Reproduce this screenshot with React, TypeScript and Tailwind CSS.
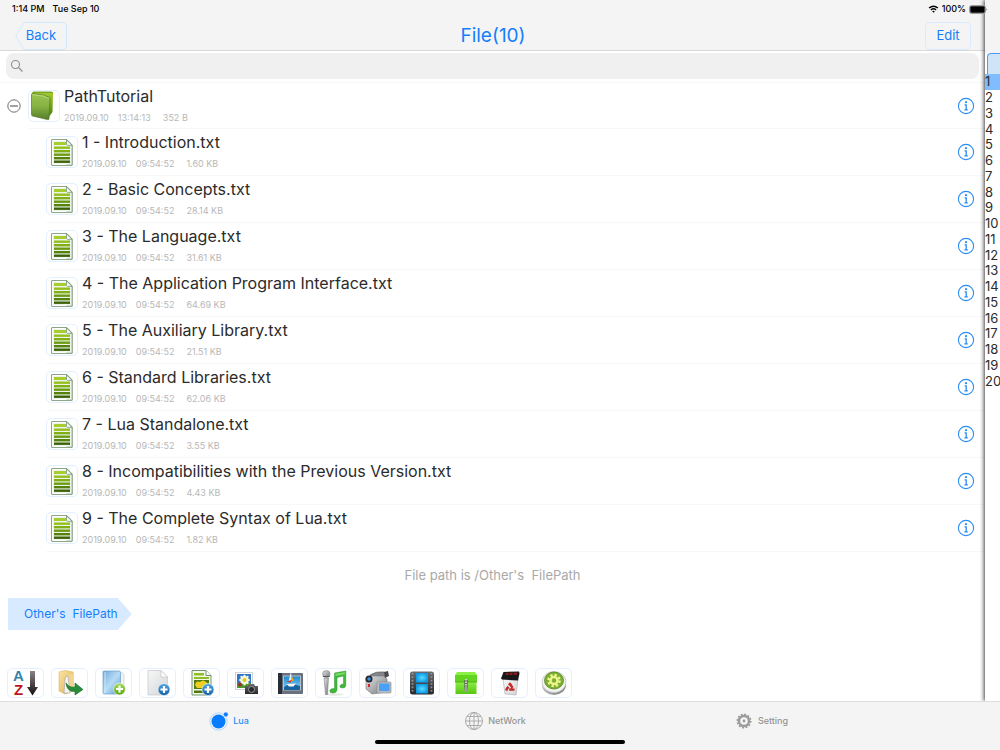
import clsx from 'clsx';
import React from 'react'

type TileProps = {
    label: string;
    children: React.ReactNode;
}

const files = [
    { name: '1 - Introduction.txt', size: '1.60 KB' },
    { name: '2 - Basic Concepts.txt', size: '28.14 KB' },
    { name: '3 - The Language.txt', size: '31.61 KB' },
    { name: '4 - The Application Program Interface.txt', size: '64.69 KB' },
    { name: '5 - The Auxiliary Library.txt', size: '21.51 KB' },
    { name: '6 - Standard Libraries.txt', size: '62.06 KB' },
    { name: '7 - Lua Standalone.txt', size: '3.55 KB' },
    { name: '8 - Incompatibilities with the Previous Version.txt', size: '4.43 KB' },
    { name: '9 - The Complete Syntax of Lua.txt', size: '1.82 KB' },
]

const lineNumbers = Array.from({ length: 20 }, (_, i) => i + 1)

// Shared gradients, referenced by id from every icon below
function Gradients() {
    return (
        <svg className="absolute h-0 w-0" aria-hidden="true">
            <defs>
                <linearGradient id="leaf" x1="0" y1="0" x2="0" y2="1">
                    <stop offset="0" stopColor="#a5cf2f" />
                    <stop offset="1" stopColor="#4a7a0c" />
                </linearGradient>
                <linearGradient id="folderFront" x1="0" y1="0" x2="0" y2="1">
                    <stop offset="0" stopColor="#9cc654" />
                    <stop offset="0.5" stopColor="#85b142" />
                    <stop offset="1" stopColor="#567c2a" />
                </linearGradient>
                <linearGradient id="arrowDown" x1="0" y1="0" x2="0" y2="1">
                    <stop offset="0" stopColor="#8d8585" />
                    <stop offset="1" stopColor="#120d0d" />
                </linearGradient>
                <linearGradient id="manila" x1="0" y1="0" x2="1" y2="1">
                    <stop offset="0" stopColor="#fbe5a4" />
                    <stop offset="1" stopColor="#dcae55" />
                </linearGradient>
                <linearGradient id="blueFolder" x1="0" y1="0" x2="1" y2="1">
                    <stop offset="0" stopColor="#6fa9dc" />
                    <stop offset="0.5" stopColor="#b7dcf6" />
                    <stop offset="1" stopColor="#5897cd" />
                </linearGradient>
                <linearGradient id="paper" x1="0" y1="0" x2="1" y2="1">
                    <stop offset="0" stopColor="#f7f7f7" />
                    <stop offset="1" stopColor="#d3d5d8" />
                </linearGradient>
                <linearGradient id="metal" x1="0" y1="0" x2="1" y2="1">
                    <stop offset="0" stopColor="#e2e3e5" />
                    <stop offset="1" stopColor="#77797d" />
                </linearGradient>
                <linearGradient id="dark" x1="0" y1="0" x2="0" y2="1">
                    <stop offset="0" stopColor="#6a6d72" />
                    <stop offset="1" stopColor="#25272b" />
                </linearGradient>
                <linearGradient id="sky" x1="0" y1="0" x2="0" y2="1">
                    <stop offset="0" stopColor="#1a86cf" />
                    <stop offset="1" stopColor="#8fd6f5" />
                </linearGradient>
                <radialGradient id="screen">
                    <stop offset="0" stopColor="#59dcff" />
                    <stop offset="1" stopColor="#0d9be6" />
                </radialGradient>
                <linearGradient id="greenPlus" x1="0" y1="0" x2="0" y2="1">
                    <stop offset="0" stopColor="#a9dc60" />
                    <stop offset="1" stopColor="#55a90e" />
                </linearGradient>
                <linearGradient id="bluePlus" x1="0" y1="0" x2="0" y2="1">
                    <stop offset="0" stopColor="#5aa9e2" />
                    <stop offset="1" stopColor="#0a5ca8" />
                </linearGradient>
                <linearGradient id="zip" x1="0" y1="0" x2="0" y2="1">
                    <stop offset="0" stopColor="#8aee3f" />
                    <stop offset="1" stopColor="#57c617" />
                </linearGradient>
            </defs>
        </svg>
    )
}

function FolderIcon() {
    return (
        <svg viewBox="0 0 28 30" className="h-[30px] w-7" aria-hidden="true">
            <path d="M2 1.500Q2 .8 3 .8L21.500 .8Q23 .8 23 2.200L22.500 21L18 27L3 23Z" fill="url(#leaf)" />
            <path d="M3 1.200H21Q22.500 1.200 22.500 2.500" fill="none" stroke="#56820f" strokeWidth="0.800" />
            <path d="M1.500 3.500Q1.500 2.200 3 2.500L14.500 4.200Q15.500 4.300 16 5.200L19 6Q20 6.300 20 7.500L19 27.500Q19 29 17.500 28.600L2.500 25Q1.500 24.700 1.500 23.500Z" fill="url(#folderFront)" stroke="#55782b" strokeWidth="0.700" />
            <path d="M2.600 3.600L14.500 5.200Q15 6.200 19 7.200" fill="none" stroke="#cbe39a" strokeWidth="0.700" />
        </svg>
    )
}

function TextFileIcon() {
    return (
        <svg viewBox="0 0 22 27" className="h-[27px] w-[22px]" aria-hidden="true">
            <path d="M.7 .7H16L21.200 6V26.300H.7Z" fill="#eef2ea" stroke="#719370" />
            <path d="M1.500 1.500H15V25.500H1.500Z" fill="none" stroke="#fff" />
            <g>
                <rect x="3" y="3" width="12" height="3" fill="#a6cf2d" />
                <rect x="3" y="7.500" width="16" height="2.400" fill="#93c01c" />
                <rect x="3" y="11" width="16" height="2.400" fill="#80b015" />
                <rect x="3" y="14.500" width="16" height="2.400" fill="#6a9c11" />
                <rect x="3" y="18" width="16" height="2.400" fill="#54820b" />
                <rect x="3" y="21.500" width="16" height="2.400" fill="#3b6206" />
            </g>
            <path d="M15.500 .9 L21 6.300 H16.500 Q15.500 6.300 15.500 5.300Z" fill="#fff" stroke="#719370" strokeWidth="0.800" />
        </svg>
    )
}

function InfoIcon() {
    return (
        <svg viewBox="0 0 18 18" className="size-[18px]" fill="none" stroke="#2a8cf5" aria-hidden="true">
            <circle cx="9" cy="9" r="7.600" strokeWidth="1.100" />
            <circle cx="9" cy="5.200" r="1.100" fill="#2a8cf5" stroke="none" />
            <path d="M7.600 7.900H9.200V12.800M7.400 12.900H10.800" strokeWidth="1.300" />
        </svg>
    )
}

function Plus({ cx, cy, fill }: { cx: number; cy: number; fill: string }) {
    return (
        <g>
            <circle cx={cx} cy={cy} r="6" fill={fill} stroke="#ffffff" strokeWidth="0.600" />
            <path d={`M${cx - 3.5} ${cy}H${cx + 3.5}M${cx} ${cy - 3.5}V${cy + 3.5}`} stroke="#fff" strokeWidth="2.200" />
        </g>
    )
}

function Tile({ label, children }: TileProps) {
    return (
        <button aria-label={label} className="flex h-[30px] w-[37px] items-center justify-center rounded-[5px] border border-[#e2f0ff] bg-white">
            <svg viewBox="0 0 28 28" className="size-7" aria-hidden="true">{children}</svg>
        </button>
    )
}

function Toolbar() {
    return (
        <div className="flex gap-[7px] px-[7px] pb-[3px]">
            <button aria-label="Sort" className="flex h-[30px] w-[37px] items-center justify-center gap-[2px] rounded-[5px] border border-[#e2f0ff] bg-white">
                <span className="flex flex-col font-['Liberation_Sans'] text-[15px] leading-[14px] font-bold">
                    <span className="text-[#3585ab]">A</span>
                    <span className="text-[#bd1521]">Z</span>
                </span>
                <svg viewBox="0 0 12 28" className="h-7 w-3" aria-hidden="true">
                    <path d="M4 2H9V18H12L6.500 26.500L1 18H4Z" fill="url(#arrowDown)" />
                </svg>
            </button>
            <Tile label="Move">
                <path d="M3 3L9 1.500L17 3V22L9 25L3 22Z" fill="url(#manila)" stroke="#d5ab59" strokeWidth="0.500" />
                <path d="M12 6L18 4V21L12 24Z" fill="#f3d590" />
                <path d="M9 10Q9 7 12 7L14 24H8Z" fill="#f4f4f1" stroke="#ababa5" strokeWidth="0.700" />
                <path d="M10 14Q13 19 19 18V14L27 20.500L19 26V22.500Q11 23 10 14Z" fill="#278d3a" stroke="#176526" strokeWidth="0.600" />
            </Tile>
            <Tile label="New folder">
                <path d="M19 3Q24 3 24 7V17L19 22Z" fill="#f3f3f3" stroke="#c9cbd0" strokeWidth="0.700" />
                <path d="M3 2.500Q3 2 4 2H19Q20.500 2 20.500 4V25H4Q3 25 3 24Z" fill="url(#blueFolder)" stroke="#6ca1cd" strokeWidth="0.700" />
                <path d="M5 3V24" stroke="#e0f0fd" strokeWidth="0.800" />
                <Plus cx={19.5} cy={20} fill="url(#greenPlus)" />
            </Tile>
            <Tile label="New file">
                <path d="M4 1.500H17L23.500 8V26H4Z" fill="url(#paper)" stroke="#c3c5c8" strokeWidth="0.700" />
                <path d="M17 1.500L23.500 8H17Z" fill="#fff" stroke="#c3c5c8" strokeWidth="0.700" />
                <Plus cx={20} cy={20.5} fill="url(#bluePlus)" />
            </Tile>
            <Tile label="Add image">
                <path d="M4 1.500H18L23 6.500V26H4Z" fill="#f2f6ec" stroke="#719370" />
                <path d="M6 4H16V6.500H6ZM6 8H21V10H6Z" fill="#8fbf20" />
                <path d="M6 11H21V20H6Z" fill="#527b12" />
                <path d="M7 16Q8 11 12 13Q15 10 18 13Q22 16 17 19H9Z" fill="#f0cf1e" />
                <path d="M6 21.500H17V24H6Z" fill="#4e7b0b" />
                <path d="M18 1.500V6.500H23" fill="#fff" stroke="#719370" />
                <Plus cx={20} cy={20.5} fill="url(#bluePlus)" />
            </Tile>
            <Tile label="Photos">
                <rect x="3.500" y="3.500" width="17" height="17" fill="#fff" stroke="#cfd3d8" />
                <rect x="5" y="5" width="14" height="14" fill="#3277c5" />
                <path d="M5 14H19V19H5Z" fill="#4b962e" />
                <g fill="#f3f5da">
                    <ellipse cx="12.500" cy="11" rx="2" ry="5.500" />
                    <ellipse cx="12.500" cy="11" rx="5.500" ry="2" />
                    <ellipse cx="12.500" cy="11" rx="2" ry="5.500" transform="rotate(45 12.5 11)" />
                    <ellipse cx="12.500" cy="11" rx="2" ry="5.500" transform="rotate(-45 12.5 11)" />
                </g>
                <circle cx="12.500" cy="11" r="2" fill="#e5c61b" />
                <circle cx="8" cy="15.500" r="2" fill="#9b3226" />
                <path d="M13 17H16L17 15H22L23 17H26V25H13Z" fill="url(#dark)" />
                <circle cx="19.500" cy="20.500" r="3" fill="#27292c" stroke="#aaa" strokeWidth="0.800" />
            </Tile>
            <Tile label="Album">
                <rect x="2" y="4" width="25" height="21" rx="1" fill="#69717e" />
                <rect x="2" y="4" width="4" height="21" fill="#292e38" />
                <rect x="7.500" y="7" width="17" height="14" fill="url(#sky)" stroke="#c9d2da" strokeWidth="0.800" />
                <path d="M8 18Q13 13 24 17V21H8Z" fill="#17649e" />
                <path d="M15 2L12.500 13H16Z" fill="#e8f0f5" />
                <path d="M15.500 6L18 12H15Z" fill="#f3a11c" />
                <path d="M10.500 12.500L16 11L15 13.500Z" fill="#c92b20" />
                <path d="M10.500 15L20 14.500L17.500 17.500H13Z" fill="#f5f5f5" />
            </Tile>
            <Tile label="Audio">
                <ellipse cx="14" cy="25.500" rx="10" ry="1.200" fill="#e5e9e2" />
                <path d="M14.500 4L25.800 2V16.500Q25.500 19 22.500 19Q19.500 19 20 16.800Q20.600 15 23.500 15V7L17 8.500V21Q16.500 24 13 24Q9.500 24 9.800 21.500Q10.500 19.300 14.500 19.500Z" fill="#3fb83a" stroke="#2d9430" strokeWidth="0.500" />
                <path d="M15.500 4.800L25 3.200V5L15.500 7Z" fill="#7edb66" />
                <path d="M4 9H8.500L7.500 25.500H5.500Z" fill="url(#metal)" stroke="#777" strokeWidth="0.500" />
                <rect x="2.800" y="1.800" width="7" height="6.500" rx="2.500" fill="url(#metal)" stroke="#777" strokeWidth="0.600" />
                <path d="M3 7.500H9.600" stroke="#555" />
            </Tile>
            <Tile label="Camera">
                <path d="M6 6Q12 2 20 3L22 4L21 10H17V7L7 9Z" fill="#85868a" stroke="#55575c" strokeWidth="0.600" />
                <path d="M2 9L8 7H20L23 10V23L8 25L2 20Z" fill="url(#metal)" stroke="#75777b" strokeWidth="0.600" />
                <circle cx="5" cy="10" r="3.500" fill="#24272e" />
                <circle cx="5" cy="10" r="1.800" fill="#3991d8" />
                <rect x="4" y="15" width="2" height="3" fill="#d32621" />
                <path d="M20 3L24 2L25 7L21 9Z" fill="#494b50" />
                <rect x="13" y="13" width="14" height="11" rx="1" fill="#babcc0" stroke="#85878b" strokeWidth="0.600" />
                <rect x="15" y="14.500" width="10.500" height="7.500" fill="#4aa1f4" />
            </Tile>
            <Tile label="Video">
                <rect x="2" y="2.500" width="24" height="23" rx="2.500" fill="url(#dark)" />
                <rect x="8" y="4" width="12" height="9.500" rx="0.500" fill="url(#screen)" />
                <rect x="8" y="15" width="12" height="9.500" rx="0.500" fill="url(#screen)" />
                <path d="M4.500 4V24M23.500 4V24" stroke="#94989d" strokeWidth="1.600" strokeDasharray="1.600 1.800" />
            </Tile>
            <Tile label="Archive">
                <path d="M3 6L5 3H23L25 6V13H3Z" fill="#8cf045" />
                <path d="M3 6H25V13H3Z" fill="#63d420" />
                <path d="M3.500 13H24.500V25H3.500Z" fill="url(#zip)" />
                <path d="M3 13H25" stroke="#46a412" strokeWidth="0.800" />
                <path d="M14 11V21" stroke="#60695a" strokeWidth="3.500" />
                <path d="M14 10V20" stroke="#d9ddd6" strokeWidth="1.800" strokeDasharray="1.500 1" />
                <rect x="12.500" y="18" width="3" height="5" rx="1" fill="#9ca198" />
            </Tile>
            <Tile label="Trash">
                <path d="M7 10H22L20 26L9 25Z" fill="url(#paper)" stroke="#aaa" strokeWidth="0.600" />
                <path d="M5 9.500L7.500 3L23 2.500L23.500 4.500L22 11.500L6 10.500Z" fill="#171719" />
                <path d="M10 3.800L21.500 3.500L21 5.800L9.500 6.200Z" fill="#8c1a1c" />
                <path d="M13 3.500V6.500M17 3.500V6.500" stroke="#171719" />
                <path d="M14 14.800L17.500 20.500H10.500Z" fill="none" stroke="#c72428" strokeWidth="2.400" strokeDasharray="4.800 1.400" strokeLinejoin="round" />
            </Tile>
            <Tile label="Preferences">
                <ellipse cx="14" cy="16" rx="12" ry="10" fill="url(#metal)" />
                <ellipse cx="14" cy="13" rx="12" ry="10.500" fill="#f3f3f0" stroke="#bcc0b9" strokeWidth="0.700" />
                <ellipse cx="14" cy="11.500" rx="9.500" ry="8.500" fill="#7cb035" stroke="#56811f" strokeWidth="0.800" />
                <circle cx="14" cy="11.500" r="5.500" fill="none" stroke="#eef58b" strokeWidth="2.500" strokeDasharray="2.300 2" />
                <circle cx="14" cy="11.500" r="3.500" fill="none" stroke="#eef58b" strokeWidth="2.500" />
            </Tile>
        </div>
    )
}

type RowProps = {
    name: string;
    time: string;
    size: string;
    folder?: boolean;
}

function Row({ name, time, size, folder }: RowProps) {
    return (
        <li className={clsx("flex", folder ? "pl-[6px]" : "pl-[46px]")}>
            {folder && (
                <button aria-label="Collapse" className="mr-[7px] flex w-[15px] items-center justify-center">
                    <svg viewBox="0 0 14 14" className="size-[14px]" fill="none" stroke="#707070" aria-hidden="true">
                        <circle cx="7" cy="7" r="6.200" />
                        <path d="M3 7H11" strokeWidth="1.300" />
                    </svg>
                </button>
            )}
            <div className={clsx("flex flex-1 items-center border-b border-[#f8f8f8] pr-[10px]", folder ? "h-[46px]" : "h-[47px]")}>
                <span className="flex size-8 shrink-0 items-center justify-center rounded-[5px] border border-[#e2f0ff]">
                    {folder ? <FolderIcon /> : <TextFileIcon />}
                </span>
                <div className="ml-1 flex-1">
                    <p className="text-base leading-5 text-[#2b2b2b]">{name}</p>
                    <p className="mt-1 flex gap-[9px] text-[9px] leading-4 text-[#b7b7b7]">
                        <span>2019.09.10</span>
                        <span>{time}</span>
                        <span className="ml-[3px]">{size}</span>
                    </p>
                </div>
                <button aria-label={`Details of ${name}`}><InfoIcon /></button>
            </div>
        </li>
    )
}

function TabBar() {
    return (
        <nav className="relative z-20 border-t border-[#dedede] bg-[#f4f4f4] text-[9px] font-medium text-[#959595]">
            <div className="flex h-[38px] justify-around pr-[106px] pl-[96px]">
                <a href="#lua" className="flex flex-1 items-center justify-center gap-1 text-[#2b8cf5]">
                    <svg viewBox="0 0 20 20" className="size-5" aria-hidden="true">
                        <circle cx="9.500" cy="10.500" r="8.700" fill="none" stroke="#9accff" strokeWidth="0.700" />
                        <circle cx="9.500" cy="10.500" r="7" fill="#087cff" />
                        <circle cx="16.800" cy="3.500" r="2.400" fill="#087cff" stroke="#f4f4f4" strokeWidth="0.600" />
                    </svg>
                    Lua
                </a>
                <a href="#network" className="flex flex-1 items-center justify-center gap-1">
                    <svg viewBox="0 0 20 20" className="size-5" fill="none" stroke="#a5a5a5" strokeWidth="0.900" aria-hidden="true">
                        <circle cx="10" cy="10" r="8.500" />
                        <ellipse cx="10" cy="10" rx="4.500" ry="8.500" />
                        <path d="M10 1.500V18.500M1.500 10H18.500M3 5.500H17M3 14.500H17" />
                    </svg>
                    NetWork
                </a>
                <a href="#setting" className="flex flex-1 items-center justify-center gap-1">
                    <svg viewBox="0 0 20 20" className="size-5" fill="none" stroke="#9b9b9b" aria-hidden="true">
                        <circle cx="10" cy="10" r="5" strokeWidth="2.400" />
                        <circle cx="10" cy="10" r="6.600" strokeWidth="1.800" strokeDasharray="1.900 1.556" />
                        <circle cx="10" cy="10" r="1.400" fill="#9b9b9b" stroke="none" />
                    </svg>
                    Setting
                </a>
            </div>
            <div className="flex h-[10px] items-end justify-center pb-[6px]">
                <span className="h-1 w-1/4 shrink-0 rounded-full bg-black" />
            </div>
        </nav>
    )
}

function Header() {
    return (
        <header className="border-b border-[#d9d9d9] bg-[#f4f4f4]">
            <div className="flex h-[18px] items-center pr-3 pl-3 text-[9px] font-medium text-black">
                <span>1:14 PM</span>
                <span className="ml-2">Tue Sep 10</span>
            </div>
            <div className="grid h-8 grid-cols-[1fr_auto_1fr] items-end pr-[14px] pl-[15px] text-[#147efb]">
                <button className="relative h-7 w-[52px] text-[13px]">
                    <svg viewBox="0 0 52 28" className="absolute inset-0 h-7 w-[52px]" fill="none" stroke="#d3e8ff" aria-hidden="true">
                        <path d="M9 .5H48Q51.500 .5 51.500 4V24Q51.500 27.500 48 27.500H9L.7 14Z" />
                    </svg>
                    Back
                </button>
                <h1 className="text-[19px] leading-7">File(10)</h1>
                <button className="h-7 w-[46px] justify-self-end rounded-[5px] border border-[#d9eaff] text-[13px]">Edit</button>
            </div>
        </header>
    )
}

function BatteryStatus() {
    return (
        <div className="absolute top-0 right-3 flex h-[18px] items-center gap-[3px] text-[9px] font-medium">
            <svg viewBox="0 0 12 9" className="h-2 w-[11px]" fill="none" stroke="#000" strokeWidth="1.500" aria-hidden="true">
                <path d="M1 3.500Q6 -.8 11 3.500M3 5.500Q6 3 9 5.500" />
                <path d="M4.500 7L6 8.600L7.500 7Q6 6 4.500 7Z" fill="#000" stroke="none" />
            </svg>
            <span>100%</span>
            <svg viewBox="0 0 19 9" className="h-[9px] w-[19px]" aria-hidden="true">
                <rect x="0.500" y="0.500" width="16" height="8" rx="2" fill="#ddd" stroke="#999" />
                <rect x="1.300" y="1.300" width="14.400" height="6.400" rx="1" />
                <path d="M17.500 3Q19 4.500 17.500 6Z" fill="#777" />
            </svg>
        </div>
    )
}

export default function App() {
    return (
        <div className="relative flex min-h-screen flex-col overflow-hidden bg-white font-['Inter',sans-serif]">
            <Gradients />
            <div className="flex flex-1">
                <main className="flex min-w-0 flex-1 flex-col bg-white">
                    <Header />
                    <div className="px-[6px] pt-[2px]">
                        <label className="flex h-[26px] items-center rounded-lg bg-[#f0f0f0] px-1">
                            <svg viewBox="0 0 14 14" className="size-[14px]" fill="none" stroke="#8d8d8d" strokeWidth="1.100" aria-hidden="true">
                                <circle cx="5.500" cy="5.500" r="4" />
                                <path d="M8.500 8.500L12.500 12.500" />
                            </svg>
                            <input type="search" aria-label="Search" className="min-w-0 flex-1 bg-transparent px-1 text-sm outline-none" />
                        </label>
                    </div>
                    <ul className="mt-[3px] border-t border-[#f8f8f8]">
                        <Row name="PathTutorial" time="13:14:13" size="352 B" folder />
                        {files.map((file) => (
                            <Row key={file.name} name={file.name} time="09:54:52" size={file.size} />
                        ))}
                    </ul>
                    <p className="mt-[13px] text-center text-[13px] leading-5 whitespace-pre text-[#a9a9a9]">{"File path is /Other's  FilePath"}</p>
                    <button className="mt-[13px] ml-2 h-8 self-start bg-[#d8eaff] pr-[14px] pl-4 text-xs whitespace-pre text-[#147efb] [clip-path:polygon(0_0,calc(100%-14px)_0,100%_50%,calc(100%-14px)_100%,0_100%)]">{"Other's  FilePath"}</button>
                    <div className="mt-auto">
                        <Toolbar />
                    </div>
                </main>
                <aside className="z-10 w-[15px] shrink-0 bg-white shadow-[-1px_0_4px_rgba(0,0,0,0.75)]">
                    <div className="h-[53px] bg-[#f4f4f4]" />
                    <div className="ml-[2px] h-[21px] rounded-tl-[4px] border border-r-0 border-b-0 border-[#4a9dff] bg-[#d0e4f8]" />
                    <ol className="flex h-[315px] flex-col text-[13px] leading-none text-[#2b2b2b]">
                        {lineNumbers.map((n) => (
                            <li key={n} className={clsx("flex flex-1 items-center", n === 1 && "bg-[#80bdff]")}>{n}</li>
                        ))}
                    </ol>
                </aside>
            </div>
            <TabBar />
            {/* sits over both panes */}
            <div className="absolute inset-x-0 top-0 z-20">
                <BatteryStatus />
            </div>
        </div>
    )
}
